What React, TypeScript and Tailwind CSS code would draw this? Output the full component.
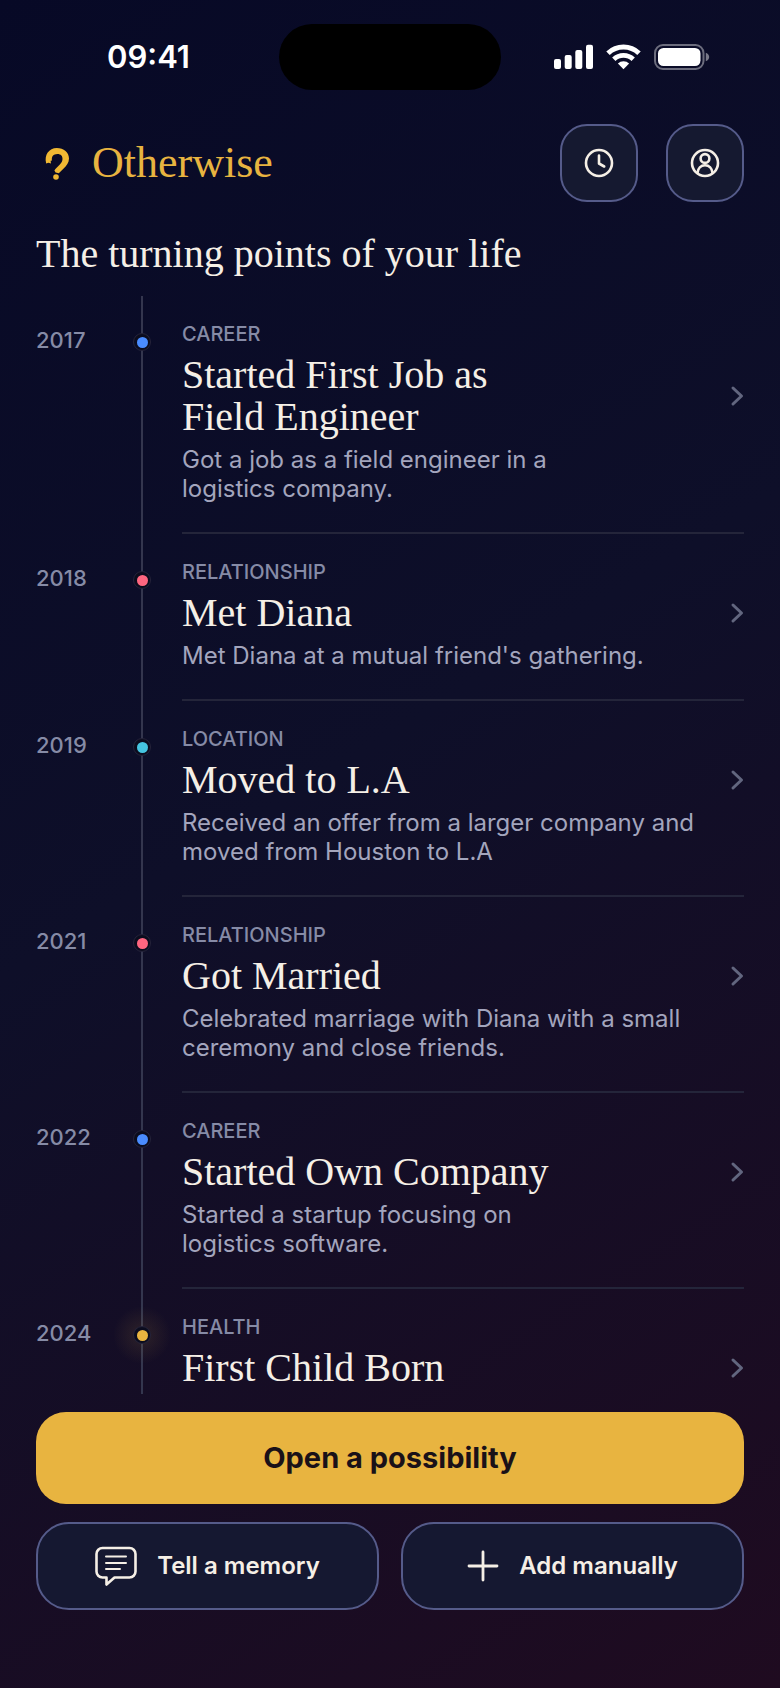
import { ReactNode } from 'react'

interface TurningPoint {
  year: string
  category: string
  title: string
  description?: string
  dot: string
  glow?: boolean
}

const turningPoints: TurningPoint[] = [
  {
    year: '2017',
    category: 'Career',
    title: 'Started First Job as\nField Engineer',
    description: 'Got a job as a field engineer in a\nlogistics company.',
    dot: 'bg-[#4a8cff]',
  },
  {
    year: '2018',
    category: 'Relationship',
    title: 'Met Diana',
    description: "Met Diana at a mutual friend's gathering.",
    dot: 'bg-[#ff6680]',
  },
  {
    year: '2019',
    category: 'Location',
    title: 'Moved to L.A',
    description: 'Received an offer from a larger company and\nmoved from Houston to L.A',
    dot: 'bg-[#45c4e0]',
  },
  {
    year: '2021',
    category: 'Relationship',
    title: 'Got Married',
    description: 'Celebrated marriage with Diana with a small\nceremony and close friends.',
    dot: 'bg-[#ff6680]',
  },
  {
    year: '2022',
    category: 'Career',
    title: 'Started Own Company',
    description: 'Started a startup focusing on\nlogistics software.',
    dot: 'bg-[#4a8cff]',
  },
  {
    year: '2024',
    category: 'Health',
    title: 'First Child Born',
    dot: 'bg-[#e8b440]',
    glow: true,
  },
]

function StatusBar() {
  return (
    <div className="grid grid-cols-[1fr_222px_1fr] items-center px-[18px] pt-6 text-white">
      <span className="text-center text-[31px] font-semibold">09:41</span>
      <div className="h-[66px] rounded-full bg-black" />
      <div className="flex items-center justify-center gap-[13px]">
        <svg width="39" height="26" viewBox="0 0 39 26" fill="currentColor">
          <rect x="0" y="15" width="7" height="10" rx="2" />
          <rect x="10.7" y="11" width="7" height="14" rx="2" />
          <rect x="21.3" y="6" width="7" height="19" rx="2" />
          <rect x="32" y="0.7" width="7" height="24.3" rx="2" />
        </svg>
        <svg width="35" height="26" viewBox="0 0 35 26" fill="none" stroke="currentColor">
          <path d="M2 9.2a22.4 22.4 0 0 1 31 0" strokeWidth="5" />
          <path d="M7.8 15.3a14 14 0 0 1 19.4 0" strokeWidth="4.8" />
          <path d="M17.5 25.2l-5.6-5.6a8 8 0 0 1 11.2 0z" fill="currentColor" stroke="none" />
        </svg>
        <svg width="56" height="26" viewBox="0 0 56 26" fill="none">
          <rect x="1" y="1" width="48.5" height="24" rx="8" stroke="#fff" strokeOpacity="0.4" strokeWidth="2" />
          <rect x="4" y="4" width="42.5" height="18" rx="5.5" fill="#fff" />
          <path d="M51.8 8.8c2.2.9 3.4 2.4 3.4 4.2s-1.2 3.3-3.4 4.2z" fill="#fff" fillOpacity="0.45" />
        </svg>
      </div>
    </div>
  )
}

function IconButton({ label, children }: { label: string; children: ReactNode }) {
  return (
    <button
      type="button"
      aria-label={label}
      className="flex size-[78px] items-center justify-center rounded-[27px] border-2 border-[#555b8a] bg-[#151930] text-[#f5efe6]"
    >
      <svg width="30" height="30" viewBox="0 0 30 30" fill="none" stroke="currentColor" strokeWidth="2.6" strokeLinecap="round" strokeLinejoin="round">
        <circle cx="15" cy="15" r="13" />
        {children}
      </svg>
    </button>
  )
}

function Header() {
  return (
    <header className="mt-[34px] flex items-center px-9">
      <svg className="ml-2 text-[#f0b833]" width="26" height="34" viewBox="0 0 26 34" fill="none">
        <path
          d="M2.2 17.4C0 9 5 2 12.8 2 19.8 2 25 6.4 25 12.6c0 4.2-2.4 7.2-5.6 10.1L14.8 27.3 11.6 26.6 10.4 24.4C13 20.8 17.8 17.8 18.4 14 19 10 16.8 8 13.4 8c-4 0-6.2 2.8-5.4 6.6l-1.4.2.4 2.6-2.6-.6z"
          fill="currentColor"
        />
        <circle cx="12" cy="31" r="2.8" fill="currentColor" />
      </svg>
      <span className="ml-[22px] font-['Liberation_Serif',serif] text-[44px] leading-[48px] text-[#e8b440]">Otherwise</span>
      <div className="ml-auto flex gap-7">
        <IconButton label="History">
          <path d="M15 7.5v8l5.2 3" />
        </IconButton>
        <IconButton label="Profile">
          <circle cx="15" cy="10.5" r="4.4" />
          <path d="M7.5 25c.4-4.8 3.4-7.8 7.5-7.8s7.1 3 7.5 7.8" />
        </IconButton>
      </div>
    </header>
  )
}

function TimelineItem({ point }: { point: TurningPoint }) {
  const { year, category, title, description, dot, glow } = point

  return (
    <li className="grid grid-cols-[97px_18px_1fr]">
      <span className="pt-8 text-[22px] leading-6 font-medium text-[#868ba6]">{year}</span>
      <div className="relative">
        <div className="absolute inset-y-0 left-2 w-0.5 bg-[#34364e]" />
        {glow && (
          <div className="absolute top-[17px] -left-5 size-[58px] bg-[radial-gradient(closest-side,rgba(232,180,64,0.12),transparent)]" />
        )}
        <div className="relative mt-[37px] flex size-[18px] items-center justify-center rounded-full border border-[#25233a] bg-[#0b0c1e]">
          <div className={`size-[11px] rounded-full ${dot}`} />
        </div>
      </div>
      <a
        href="#"
        className={`ml-[31px] block pt-[26px] ${description ? 'border-b-2 border-[#24253a] pb-[29px]' : 'pb-[5px]'}`}
      >
        <p className="text-[20px] leading-6 font-medium text-[#868ba6] uppercase">{category}</p>
        <div className="mt-2 flex items-center justify-between">
          <h2 className="font-['Liberation_Serif',serif] text-[40px] leading-[42px] whitespace-pre-line text-[#f5efe6]">
            {title}
          </h2>
          <svg width="14" height="22" viewBox="0 0 14 22" fill="none" stroke="#62667f" strokeWidth="3" strokeLinecap="round" strokeLinejoin="round">
            <path d="M3 3l8.5 8L3 19" />
          </svg>
        </div>
        {description && (
          <p className="mt-[7px] text-[24px] leading-[29px] whitespace-pre-line text-[#a3a5bd]">{description}</p>
        )}
      </a>
    </li>
  )
}

export default function App() {
  return (
    <div className="flex min-h-screen flex-col bg-[linear-gradient(148deg,#070926_0%,#0e0f29_45%,#1f0b20_100%)] font-['Inter',sans-serif]">
      <StatusBar />
      <Header />
      <main className="px-9 pt-7">
        <h1 className="font-['Liberation_Serif',serif] text-[40px] leading-[48px] text-[#f5efe6]">
          The turning points of your life
        </h1>
        <ol className="mt-[18px]">
          {turningPoints.map((point) => (
            <TimelineItem key={point.year} point={point} />
          ))}
        </ol>
      </main>
      <footer className="mt-[18px] px-9 pb-[78px]">
        <button
          type="button"
          className="h-[92px] w-full rounded-[30px] bg-[#e8b440] text-[29px] font-bold text-[#1a1118]"
        >
          Open a possibility
        </button>
        <div className="mt-[18px] grid grid-cols-2 gap-[22px] text-[24px] font-semibold text-[#f5efe6]">
          <button
            type="button"
            className="flex h-[88px] items-center justify-center gap-5 rounded-[33px] border-2 border-[#555b8a] bg-[#151831]"
          >
            <svg width="42" height="40" viewBox="0 0 42 40" fill="none" stroke="currentColor" strokeWidth="2.6" strokeLinecap="round" strokeLinejoin="round">
              <path d="M7.5 2h27a6 6 0 0 1 6 6v17.5a6 6 0 0 1-6 6h-15l-8 7v-7h-4a6 6 0 0 1-6-6V8a6 6 0 0 1 6-6z" />
              <path d="M11 10.5h20M11 17h20M11 23h14" strokeWidth="2" />
            </svg>
            Tell a memory
          </button>
          <button
            type="button"
            className="flex h-[88px] items-center justify-center gap-5 rounded-[33px] border-2 border-[#555b8a] bg-[#151831]"
          >
            <svg width="32" height="32" viewBox="0 0 32 32" fill="none" stroke="currentColor" strokeWidth="2.8" strokeLinecap="round">
              <path d="M16 2v28M2 16h28" />
            </svg>
            Add manually
          </button>
        </div>
      </footer>
    </div>
  )
}
